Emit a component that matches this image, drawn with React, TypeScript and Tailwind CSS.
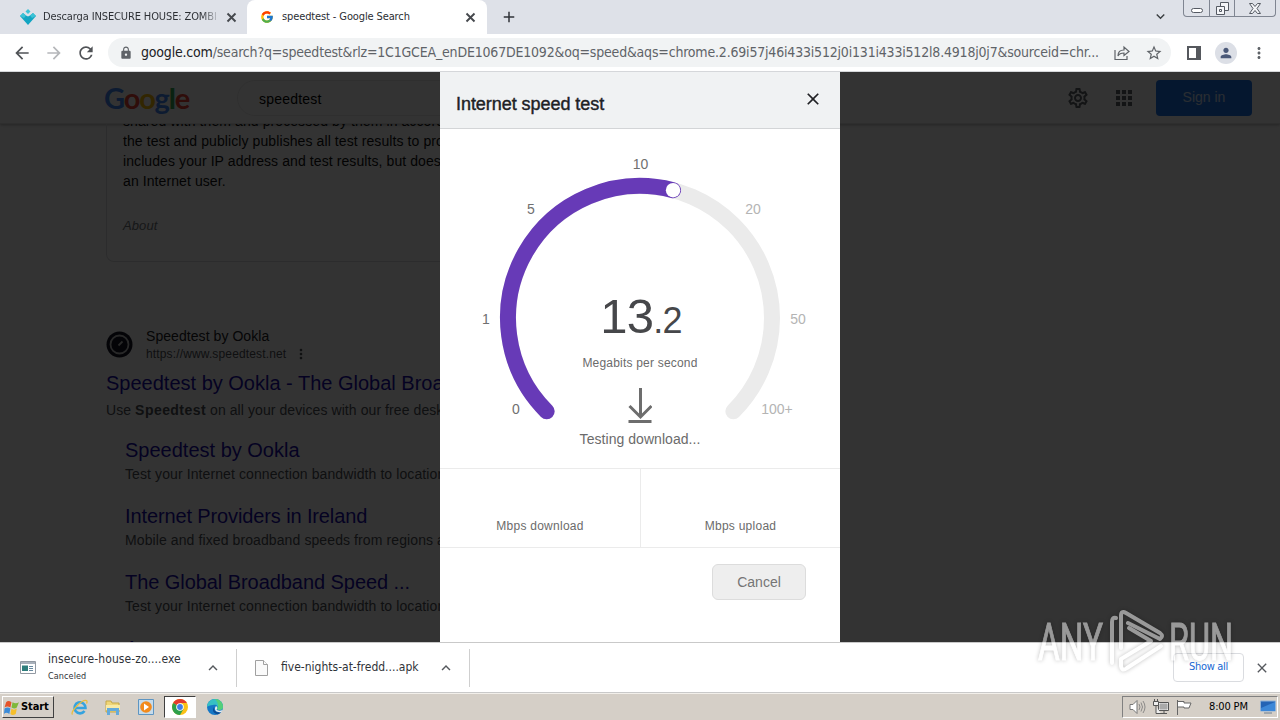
import React from "react";
import {
  MdAdd,
  MdApps,
  MdArrowBack,
  MdArrowForward,
  MdClose,
  MdExpandLess,
  MdExpandMore,
  MdLock,
  MdMoreVert,
  MdOutlineSettings,
  MdPerson,
  MdRefresh,
  MdStarBorder,
} from "react-icons/md";
import { FcGoogle } from "react-icons/fc";

const CENTER = { x: 200, y: 189 };
const RADIUS = 132;

const pointAt = (deg: number) => {
  const rad = (deg * Math.PI) / 180;
  return { x: CENTER.x + RADIUS * Math.sin(rad), y: CENTER.y - RADIUS * Math.cos(rad) };
};

const arc = (from: number, to: number) => {
  const a = pointAt(from);
  const b = pointAt(to);
  const large = to - from > 180 ? 1 : 0;
  return `M${a.x} ${a.y}A${RADIUS} ${RADIUS} 0 ${large} 1 ${b.x} ${b.y}`;
};

const gaugeLabels = [
  { text: "0", x: 76, y: 285, active: true },
  { text: "1", x: 46, y: 195, active: true },
  { text: "5", x: 91, y: 85, active: true },
  { text: "10", x: 200.5, y: 40, active: true },
  { text: "20", x: 313, y: 85, active: false },
  { text: "50", x: 358, y: 195, active: false },
  { text: "100+", x: 337, y: 285, active: false },
];

const siteLinks = [
  {
    title: "Speedtest by Ookla",
    titleClass: "tracking-[0px]",
    text: "Test your Internet connection bandwidth to locations around the world",
  },
  {
    title: "Internet Providers in Ireland",
    titleClass: "tracking-[-0.12px]",
    text: "Mobile and fixed broadband speeds from regions across Ireland",
  },
  {
    title: "The Global Broadband Speed ...",
    titleClass: "tracking-[-0.06px]",
    text: "Test your Internet connection bandwidth to locations around the world",
  },
];

const TabClose = () => (
  <svg className="h-[13px] w-[13px] shrink-0" viewBox="0 0 13 13" fill="none" stroke="#45484d" strokeWidth="1.900">
    <path d="M2.500 2.500l8 8M10.500 2.500l-8 8" />
  </svg>
);

const TabStrip = () => (
  <div className="flex h-[34px] bg-[#dee1e8] text-[11px] text-[#2b2e33]">
    <div className="flex h-[34px] w-[247px] shrink-0 items-center rounded-br-lg pl-5">
      <svg className="mr-[7px] h-4 w-4 shrink-0" viewBox="0 0 16 16">
        <path d="M8 0l2.500 2.500L8 5 5.500 2.500z" fill="#3cc3d6" />
        <path d="M0 7l3-3 3 2.500 2 1 2-1L13 4l3 3-8 9z" fill="#12a5c2" />
        <path d="M3 4l3 2.500L4 9 0 7zM13 4l-3 2.500L12 9l4-2z" fill="#3cc3d6" />
      </svg>
      <div className="w-[177px] overflow-hidden whitespace-nowrap bg-gradient-to-r from-[#2b2e33] from-90% to-transparent bg-clip-text tracking-[-0.12px] text-transparent">
        Descarga INSECURE HOUSE: ZOMBI
      </div>
      <div className="ml-[5px]">
        <TabClose />
      </div>
    </div>
    <div className="flex h-[34px] w-[240px] shrink-0 items-center rounded-t-lg bg-white pl-[13px]">
      <FcGoogle className="mr-2 h-[14px] w-[14px] shrink-0" />
      <div className="w-[182px] whitespace-nowrap tracking-[-0.12px]">speedtest - Google Search</div>
      <TabClose />
    </div>
    <MdAdd className="ml-[13px] mt-2 h-[18px] w-[18px] text-[#303338]" />
    <div className="ml-auto flex">
      <MdExpandMore className="mr-[14px] mt-2 h-[17px] w-[17px] text-[#3c4043]" />
      <div className="flex h-[17px] w-[93px] divide-x divide-[#7f8591] rounded-b border-x border-b border-[#7f8591]">
        <div className="flex w-[26px] items-center justify-center">
          <div className="mt-[5px] h-[5px] w-3 rounded-sm border border-[#555a63] bg-white" />
        </div>
        <div className="flex w-[25px] items-center justify-center">
          <svg className="h-[13px] w-[13px]" viewBox="0 0 13 13" fill="#f4f5f8" stroke="#555a63">
            <path d="M4.500.5h8v8h-8z" />
            <path d="M.5 4.500h8v8h-8zM3.500 7.500h2v2h-2z" />
          </svg>
        </div>
        <div className="flex flex-1 items-center justify-center">
          <svg className="h-[11px] w-3" viewBox="0 0 12 11" fill="#f4f5f8" stroke="#555a63">
            <path d="M.5.5h3L6 3.500 8.500.5h3L8 5.500l3.500 5h-3L6 7.500l-2.500 3h-3L4 5.500z" />
          </svg>
        </div>
      </div>
      <div className="w-1" />
    </div>
  </div>
);

const Toolbar = () => (
  <div className="flex h-[38px] items-center border-b border-[#d5d7da] bg-white text-[#5f6368]">
    <MdArrowBack className="ml-3 h-5 w-5 text-[#505357]" />
    <MdArrowForward className="ml-3 h-5 w-5 text-[#b5b7ba]" />
    <MdRefresh className="ml-3 h-5 w-5 text-[#505357]" />
    <div className="ml-3 flex h-[29px] w-[1063px] shrink-0 items-center rounded-full bg-[#f1f3f4] pl-[11px]">
      <MdLock className="mr-2 h-[14px] w-[14px] shrink-0" />
      <div className="w-[973px] whitespace-nowrap text-[14px] tracking-[-0.19px]">
        <span className="text-[#202124]">google.com</span>
        /search?q=speedtest&amp;rlz=1C1GCEA_enDE1067DE1092&amp;oq=speed&amp;aqs=chrome.2.69i57j46i433i512j0i131i433i512l8.4918j0j7&amp;sourceid=chr...
      </div>
      <svg className="h-4 w-4 shrink-0" viewBox="0 0 16 16" fill="none" stroke="currentColor" strokeWidth="1.200">
        <path d="M1 5v9.500h12V11" />
        <path d="M4 11c0-4 2-6 6-6V2l5 4.500-5 4V8C7 8 5 9 4 11z" />
      </svg>
      <MdStarBorder className="ml-[15px] h-[18px] w-[18px] shrink-0" />
    </div>
    <svg className="ml-4 h-[14px] w-[14px]" viewBox="0 0 14 14">
      <path d="M1 1h12v12H1z" fill="none" stroke="#55585d" strokeWidth="2" />
      <path d="M9 1h5v12H9z" fill="#55585d" />
    </svg>
    <div className="ml-[14px] flex h-[22px] w-[22px] items-center justify-center rounded-full bg-[#dcdfe6]">
      <MdPerson className="h-4 w-4 text-[#4a5878]" />
    </div>
    <MdMoreVert className="ml-[13px] h-[18px] w-[18px]" />
  </div>
);

const GoogleHeader = () => (
  <div className="flex h-[52px] shrink-0 items-center border-b border-[#e4e4e4] shadow-[0_1px_3px_rgba(0,0,0,0.3)]">
    <div className="ml-[104px] w-[133px] font-['Lato',sans-serif] text-[29px] font-bold leading-none tracking-[-1.200px]">
      <span className="text-[#4285f4]">G</span>
      <span className="text-[#ea4335]">o</span>
      <span className="text-[#fbbc05]">o</span>
      <span className="text-[#4285f4]">g</span>
      <span className="text-[#34a853]">l</span>
      <span className="text-[#ea4335]">e</span>
    </div>
    <div className="flex h-9 w-[560px] items-center rounded-full border border-[#ececec] pl-[21px] pt-[3px] text-[14px] tracking-[0.2px] text-black">
      speedtest
    </div>
    <MdOutlineSettings className="ml-auto h-6 w-6 text-[#5f6368]" />
    <MdApps className="ml-[22px] h-6 w-6 text-[#5f6368]" />
    <div className="ml-5 mr-7 flex h-9 w-24 items-center justify-center rounded bg-[#1a73e8] text-[14px] tracking-[0px] text-white/80">
      Sign in
    </div>
  </div>
);

const SearchResults = () => (
  <div className="w-[652px] overflow-hidden pl-[106px]">
    <div className="h-[138px] overflow-hidden whitespace-nowrap rounded-b-lg border-x border-b border-[#dadce0] pl-4 text-[14px] leading-5 tracking-[0.09px] text-[#111]">
      <div className="-mt-[13px]">shared with them and processed by them in accordance with</div>
      <div>the test and publicly publishes all test results to promote</div>
      <div>includes your IP address and test results, but doesn't include</div>
      <div>an Internet user.</div>
      <div className="mt-[25px] text-[13px] italic text-[#70757a]">About</div>
    </div>
    <div className="mt-[65px] flex items-center">
      <svg className="mb-[1px] h-[27px] w-[27px]" viewBox="0 0 27 27">
        <circle cx="13.500" cy="13.500" r="13" fill="#141526" />
        <circle cx="13.500" cy="13.500" r="9" fill="none" stroke="#c8c8c8" strokeWidth="1.800" />
        <path d="M12.500 14.500l4-4" stroke="#c8c8c8" strokeWidth="1.800" />
      </svg>
      <div className="ml-[13px]">
        <div className="text-[14px] leading-[18px] tracking-[0.06px] text-[#202124]">Speedtest by Ookla</div>
        <div className="flex items-center text-[12px] leading-[18px] tracking-[0.14px] text-[#4d5156]">
          https://www.speedtest.net
          <MdMoreVert className="ml-[7px] h-4 w-4" />
        </div>
      </div>
    </div>
    <div className="mt-[7px] whitespace-nowrap text-[20px] leading-[26px] tracking-[0px] text-[#1a0dab]">
      Speedtest by Ookla - The Global Broadband Speed Test
    </div>
    <div className="mt-1 whitespace-nowrap text-[14px] leading-[20px] tracking-[0.08px] text-[#4d5156]">
      Use <b className="tracking-[0.45px]">Speedtest</b> on all your devices with our free desktop and mobile apps.
    </div>
    <div className="mt-[17px] pl-[19px]">
      {siteLinks.map((link) => (
        <div key={link.title} className="h-[66px] whitespace-nowrap">
          <div className={`text-[20px] leading-[26px] text-[#1a0dab] ${link.titleClass}`}>{link.title}</div>
          <div className="mt-[1px] text-[14px] leading-[20px] tracking-[0.1px] text-[#4d5156]">{link.text}</div>
        </div>
      ))}
      <div className="text-[20px] leading-[26px] text-[#1a0dab]">Apps</div>
    </div>
  </div>
);

const Gauge = () => {
  const knob = pointAt(14.5);
  return (
    <div className="relative h-[339px]">
      <svg className="block h-[339px] w-[400px]" viewBox="0 0 400 339">
        <path d={arc(-135, 135)} fill="none" stroke="#ebebeb" strokeWidth="16" strokeLinecap="round" />
        <path d={arc(-135, 14.5)} fill="none" stroke="#673ab7" strokeWidth="16" strokeLinecap="round" />
        <circle cx={knob.x} cy={knob.y} r="7.200" fill="#fff" />
        {gaugeLabels.map((label) => (
          <text
            key={label.text}
            x={label.x}
            y={label.y}
            textAnchor="middle"
            className={label.active ? "fill-[#707070] text-[14px]" : "fill-[#b4b4b4] text-[14px]"}
          >
            {label.text}
          </text>
        ))}
      </svg>
      <div className="absolute left-[120px] top-[159px] flex w-[160px] flex-col items-center text-[#6b6b6b]">
        <div className="h-14 pl-[2px] text-[49px] leading-[56px] tracking-[-0.800px] text-[#46474a]">
          13<span className="text-[36px]">.2</span>
        </div>
        <div className="mt-[10px] text-[12px] leading-[18px] tracking-[0.2px]">Megabits per second</div>
        <svg className="mt-4 h-[35px] w-[24px]" viewBox="0 0 24 35" fill="none" stroke="#6d6d6d" strokeWidth="3">
          <path d="M12.500 0v29M1.500 18l11 11 11-11M.5 33.500h23" />
        </svg>
        <div className="mt-[6px] text-[14px] leading-5 tracking-[0.05px]">Testing download...</div>
      </div>
    </div>
  );
};

const SpeedTestDialog = () => (
  <div className="flex h-[570px] w-[400px] flex-col bg-white">
    <div className="flex h-[57px] shrink-0 items-center justify-between border-b border-[#d3d5d7] bg-[#f0f2f3] pl-4 pr-[17px]">
      <div className="pt-[9px] text-[18px] tracking-[-0.05px] text-[#202124] [-webkit-text-stroke:0.4px_#202124]">
        Internet speed test
      </div>
      <MdClose className="mb-[2px] h-5 w-5 text-[#202124]" />
    </div>
    <Gauge />
    <div className="grid h-20 grid-cols-[200px_200px] border-y border-[#ebebeb] text-center text-[12px] tracking-[0.25px] text-[#6b6b6b]">
      <div className="pt-[48px]">Mbps download</div>
      <div className="border-l border-[#ebebeb] pt-[48px]">Mbps upload</div>
    </div>
    <button className="ml-auto mr-[34px] mt-4 h-9 w-[94px] rounded-md border border-[#dcdcdc] bg-[#eeeeee] text-[14px] text-[#757575]">
      Cancel
    </button>
  </div>
);

const DownloadBar = () => (
  <div className="flex h-[51px] items-center border-b border-t border-[#c9c9c9] bg-white text-[12px] text-[#2f3338]">
    <div className="flex h-[38px] w-[237px] items-center border-r border-[#cfcfcf]">
      <svg className="ml-5 h-[13px] w-4" viewBox="0 0 16 13">
        <path d="M.5.5h15v12H.5z" fill="#fff" stroke="#9299a2" />
        <path d="M1 1h14v2H1z" fill="#a9b1bb" />
        <path d="M2 4.500h6v5.500H2z" fill="#2e7d7b" />
        <path d="M9 5.500h4M9 7.500h4M9 9.500h4" stroke="#6889a0" />
      </svg>
      <div className="mb-[2px] ml-3 w-[156px] whitespace-nowrap">
        <div className="leading-4 tracking-[0.08px]">insecure-house-zo....exe</div>
        <div className="mt-[2px] text-[9px] leading-[14px] tracking-[0.1px]">Canceled</div>
      </div>
      <MdExpandLess className="h-[18px] w-[18px] text-[#55585d]" />
    </div>
    <div className="flex h-[38px] w-[233px] items-center border-r border-[#cfcfcf]">
      <svg className="ml-[18px] h-4 w-[13px]" viewBox="0 0 13 16" fill="#fafafa" stroke="#a0a0a0">
        <path d="M.5.5h8l4 4v11H.5z" />
        <path d="M8.500.5v4h4" />
      </svg>
      <div className="mb-[2px] ml-[13px] w-[156px] whitespace-nowrap tracking-[0px]">five-nights-at-fredd....apk</div>
      <MdExpandLess className="h-[18px] w-[18px] text-[#55585d]" />
    </div>
    <div className="ml-auto flex h-[29px] w-[71px] items-center justify-center rounded border border-[#dadce0] text-[11px] tracking-[-0.3px] text-[#1967d2]">
      Show all
    </div>
    <MdClose className="ml-[10px] mr-[10px] h-4 w-4 text-[#55585d]" />
  </div>
);

const ChromeIcon = () => (
  <svg className="h-4 w-4" viewBox="0 0 16 16">
    <circle cx="8" cy="8" r="8" fill="#fbc116" />
    <path d="M8 8L1.100 4A8 8 0 0 1 14.900 4H8z" fill="#e33b2e" />
    <path d="M8 8L1.100 4A8 8 0 0 0 8 16l3.500-6z" fill="#2da04b" />
    <circle cx="8" cy="8" r="3.800" fill="#fff" />
    <circle cx="8" cy="8" r="2.900" fill="#3f7de8" />
  </svg>
);

const Taskbar = () => (
  <div className="flex h-[27px] items-center border-t border-[#f2efea] bg-[#d5cfc7] text-[11px] text-black">
    <div className="ml-[2px] flex h-[22px] w-[52px] items-center border border-b-[#404040] border-l-white border-r-[#404040] border-t-white pl-[1px] font-bold tracking-[-0.1px]">
      <svg className="mr-[1px] h-[15px] w-4 shrink-0" viewBox="0 0 15 14">
        <path d="M2 2q2-2 5 0L6 7Q3 5 .5 7z" fill="#e5532a" />
        <path d="M8 2q3 2 6 0l-2 5q-2 2-5 0z" fill="#7fb83a" />
        <path d="M.5 8q3-2 5.500 0l-1 5q-3-2-5 0z" fill="#3b8bd8" />
        <path d="M7 8q2 2 5 0l-1 5q-3 2-5 0z" fill="#f6bf2a" />
      </svg>
      Start
    </div>
    <svg className="ml-[17px] h-[17px] w-[17px]" viewBox="0 0 17 17" fill="none">
      <path d="M13.500 12A5.500 5.500 0 1 1 14.500 9H4" stroke="#35a3df" strokeWidth="2.600" />
      <path d="M1.500 15.500C-1 13 11 0 15.500 1.500c1 .8.500 2 0 3" stroke="#e9bd3d" strokeWidth="1.300" />
    </svg>
    <svg className="ml-[17px] h-[15px] w-4" viewBox="0 0 16 15">
      <path d="M1 1h5l1 2h7v9H1z" fill="#f0d678" stroke="#c5a747" />
      <path d="M1 5h14v5H1z" fill="#f9eaa5" />
      <path d="M2 15V8h12v7h-3v-4H5v4z" fill="#64aadb" />
    </svg>
    <svg className="ml-[17px] h-4 w-4" viewBox="0 0 16 16">
      <path d="M.5.5h15v15H.5z" fill="#c6dbea" stroke="#5d95c2" />
      <circle cx="8" cy="8" r="5.800" fill="#f28a1c" />
      <path d="M6 4.500l5 3.500-5 3.500z" fill="#fff" />
    </svg>
    <div className="ml-[10px] flex h-[22px] w-[32px] items-center justify-center border border-b-white border-l-[#404040] border-r-white border-t-[#404040] bg-white">
      <ChromeIcon />
    </div>
    <svg className="ml-[11px] h-4 w-4" viewBox="0 0 16 16">
      <circle cx="8" cy="8" r="8" fill="#1577c6" />
      <path d="M0 8a8 8 0 0 1 16 0c0 3-4 4-6 2 2-3-1-5-4-4-3 0-5 1-6 2z" fill="#36c0c4" />
      <path d="M8 0a8 8 0 0 1 8 8c0 3-4 4-6 2 2-3 1-7-2-10z" fill="#54cf79" />
      <path d="M7 8c-1 4 3 6 7 5l-2 2C8 16 4 12 7 8z" fill="#0c4c94" />
      <path d="M9 7c2 1 1 3 .5 3.500 1.500 1.500 4 1.500 6 .5l-1 2C10 14 6 11 9 7z" fill="#e7eef0" />
    </svg>
    <div className="ml-auto mr-[2px] flex h-[22px] w-[156px] items-center border border-b-white border-l-[#808080] border-r-white border-t-[#808080] pl-[6px]">
      <svg className="h-4 w-[17px]" viewBox="0 0 17 16" fill="none" stroke="#777">
        <path d="M1 5.500h3l4-4v13l-4-4H1z" fill="#fff" />
        <path d="M10 5q2 3 0 6M12 3.500q3 4.500 0 9M14 2q4 6 0 12" strokeWidth="0.800" />
      </svg>
      <svg className="ml-[7px] h-4 w-4" viewBox="0 0 16 16" fill="#eee" stroke="#555">
        <path d="M5.500 3.500h10v8h-10zM8 14.500h6M11 12v2" />
        <path d="M7 5h7v5H7z" fill="#aaa" stroke="#aaa" />
        <path d="M.5 2.500h5v4h-5zM3 7v7.500h5M1.500 0v2M4.500 0v2" />
      </svg>
      <svg className="ml-[7px] h-4 w-4" viewBox="0 0 16 16" fill="#fff" stroke="#666">
        <path d="M1.500 1v15M2 2.500h6v1.500h7l-2 5H8V8H2" />
      </svg>
      <div className="ml-[17px] w-[41px] whitespace-nowrap tracking-[-0.15px]">8:00 PM</div>
      <svg className="ml-[10px] h-[14px] w-4 shrink-0" viewBox="0 0 16 14">
        <path d="M.5 1h15v10H.5z" fill="#2464b5" stroke="#8fb2d8" />
        <path d="M1 8l14-6v9H1z" fill="#3d88d8" />
        <path d="M4 13h8" stroke="#6b7f92" />
      </svg>
    </div>
  </div>
);

const Watermark = () => (
  <svg
    className="absolute left-[1030px] top-[604px] h-[74px] w-[210px] opacity-50 drop-shadow-[0_0_2px_rgba(0,0,0,0.5)]"
    viewBox="0 0 210 74"
    fill="#fff"
  >
    <g stroke="#fff" strokeWidth="1" className="font-['Roboto',sans-serif] text-[51px]">
      <text x="8" y="56" textLength="65" lengthAdjust="spacingAndGlyphs">
        ANY
      </text>
      <text x="139" y="56" textLength="64" lengthAdjust="spacingAndGlyphs">
        RUN
      </text>
    </g>
    <g fill="none" stroke="#fff" strokeWidth="4" strokeLinejoin="round" strokeLinecap="round">
      <path d="M82 59V18q0-5 4-4" />
      <path d="M91 44V12q0-6 5-3l34 20q4 3 0 6L98 19" />
      <path d="M131 42L97 64q-5 4-6-2v-7M91 55l30-18-22-13" />
    </g>
  </svg>
);

export default function App() {
  return (
    <div className="relative flex h-[720px] w-[1280px] flex-col overflow-hidden font-['DejaVu_Sans_Condensed','DejaVu_Sans',sans-serif]">
      <TabStrip />
      <Toolbar />
      <div className="relative flex h-[570px] flex-col overflow-hidden bg-white font-['Liberation_Sans',Arial,sans-serif]">
        <GoogleHeader />
        <SearchResults />
        <div className="absolute inset-0 flex justify-center bg-black/80">
          <SpeedTestDialog />
        </div>
      </div>
      <DownloadBar />
      <Taskbar />
      <Watermark />
    </div>
  );
}
